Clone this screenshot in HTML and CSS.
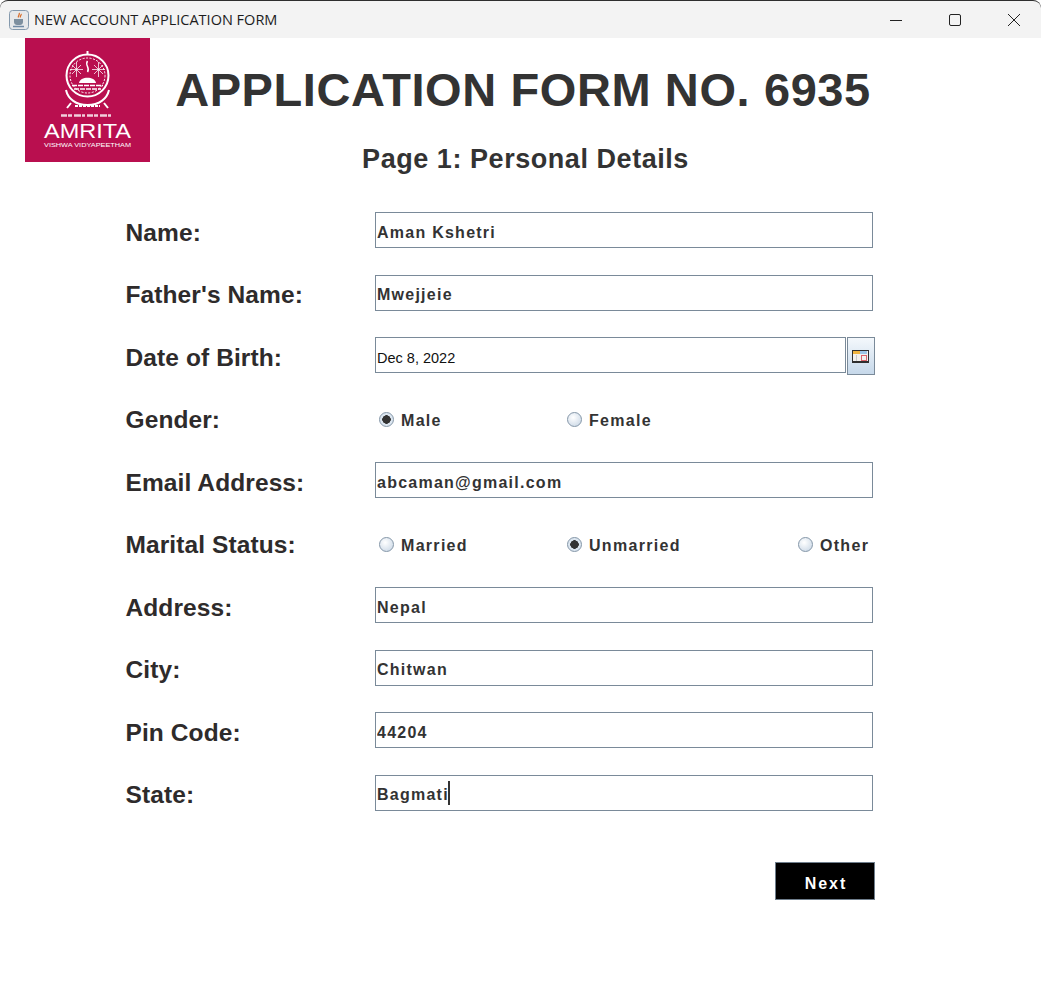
FILE: index.html

```html
<!DOCTYPE html>
<html lang="en">
<head>
  <meta charset="UTF-8" />
  <meta name="viewport" content="width=device-width, initial-scale=1.0" />
  <title>New Account Application Form</title>
  <link rel="stylesheet" href="styles.css">
</head>
<body>
  <div class="titlebar">
    <svg class="app-icon" width="20" height="20" viewBox="0 0 20 20">
      <rect x="0.500" y="0.500" width="19" height="19" rx="3" fill="#e6e8ea" stroke="#8499ad"/>
      <path d="M10 3c1.500 1.500-1.500 2.500-.5 4.500M12 4c1 1-1.500 2-.5 3.500" fill="none" stroke="#d9702e" stroke-width="1.300"/>
      <path d="M5 9h9v3c0 2-1.500 3-3 3H8c-1.500 0-3-1-3-3z" fill="#7d8f9f"/>
      <path d="M4 16.500h11" stroke="#6f8aa5" stroke-width="1.500"/>
    </svg>
    <span class="window-title">NEW ACCOUNT APPLICATION FORM</span>
    <div class="window-controls">
      <svg width="12" height="12" viewBox="0 0 12 12"><path d="M0 6.500h12" stroke="#222" fill="none"/></svg>
      <svg width="12" height="12" viewBox="0 0 12 12"><rect x="0.500" y="0.500" width="11" height="11" rx="1.500" stroke="#222" fill="none"/></svg>
      <svg width="12" height="12" viewBox="0 0 12 12"><path d="M0 0l12 12M12 0L0 12" stroke="#222" fill="none"/></svg>
    </div>
  </div>

  <div class="header">
    <svg class="logo" width="125" height="124" viewBox="0 0 125 124">
      <rect width="125" height="124" fill="#b90f4f"/>
      <g fill="none" stroke="#fff">
        <path d="M62.500 13v3" stroke-width="2"/>
        <circle cx="62.500" cy="37.500" r="21" stroke-width="2"/>
        <circle cx="62.500" cy="37.500" r="17.500" stroke-width="1" stroke-dasharray="2 1.500"/>
        <path d="M47 27l9 9M56 27l-9 9M51.500 24v15M45 31.500h13M69 27l9 9M78 27l-9 9M73.500 24v15M67 31.500h13" stroke-width="1" opacity="0.750"/>
        <path d="M62.500 23c-3 4 3 7 0 11" stroke-width="1.500"/>
        <path d="M41 52c2 9 10 15 21.500 15s19.500-6 21.500-15" stroke-width="2"/>
        <path d="M46 65l-4 5M79 65l4 5" stroke-width="2"/>
        <path d="M50 68h25" stroke-width="2" stroke-dasharray="3 1"/>
        <path d="M36 77.500h52" stroke-width="2.500" stroke-dasharray="6 1 4 2 7 1 3 2" opacity="0.800"/>
      </g>
      <path d="M54 45c1-7 16-7 17 0z" fill="#fff"/>
      <path d="M47 47.500h31M49 51h27" stroke="#fff" stroke-width="1.500" stroke-dasharray="5 1"/>
      <text class="logo-name" x="62.500" y="100" textLength="87" lengthAdjust="spacingAndGlyphs">AMRITA</text>
      <text class="logo-sub" x="62.500" y="109" textLength="87" lengthAdjust="spacingAndGlyphs">VISHWA VIDYAPEETHAM</text>
    </svg>
    <div class="headings">
      <h1>APPLICATION FORM NO. 6935</h1>
      <h2>Page 1: Personal Details</h2>
    </div>
  </div>

  <form class="form">
    <div class="row"><label>Name:</label><input class="field" type="text" value="Aman Kshetri"></div>
    <div class="row"><label>Father's Name:</label><input class="field" type="text" value="Mwejjeie"></div>
    <div class="row">
      <label>Date of Birth:</label>
      <div class="date-wrap">
        <input class="field date" type="text" value="Dec 8, 2022">
        <button class="cal-btn" type="button">
          <svg width="17" height="13" viewBox="0 0 17 13">
            <rect width="17" height="13" fill="#2e2e2e"/>
            <rect x="1" y="1" width="15" height="10" fill="#f2f0ee"/>
            <rect x="1" y="1" width="7" height="3" fill="#f0b440"/>
            <rect x="8" y="1" width="7" height="3" fill="#9cc4e6"/>
            <rect x="9.500" y="5.500" width="5" height="5" fill="none" stroke="#d9636b"/>
            <path d="M4.500 5v6" stroke="#c8c8c8"/>
          </svg>
        </button>
      </div>
    </div>
    <div class="row">
      <label>Gender:</label>
      <div class="radios">
        <span class="radio-item"><i class="radio on"></i>Male</span>
        <span class="radio-item"><i class="radio"></i>Female</span>
      </div>
    </div>
    <div class="row"><label>Email Address:</label><input class="field" type="text" value="abcaman@gmail.com"></div>
    <div class="row">
      <label>Marital Status:</label>
      <div class="radios">
        <span class="radio-item"><i class="radio"></i>Married</span>
        <span class="radio-item"><i class="radio on"></i>Unmarried</span>
        <span class="radio-item"><i class="radio"></i>Other</span>
      </div>
    </div>
    <div class="row"><label>Address:</label><input class="field" type="text" value="Nepal"></div>
    <div class="row"><label>City:</label><input class="field" type="text" value="Chitwan"></div>
    <div class="row"><label>Pin Code:</label><input class="field" type="text" value="44204"></div>
    <div class="row">
      <label>State:</label>
      <div class="field caret-field">Bagmati<span class="caret"></span></div>
    </div>
    <div class="actions"><button class="next" type="button">Next</button></div>
  </form>
</body>
</html>
```

FILE: styles.css

```css
* { box-sizing: border-box; }
body { margin: 0; background: #fff; font-family: "Liberation Sans", Arial, sans-serif; color: #333; }

.titlebar { display: flex; align-items: center; height: 38px; padding-left: 9px; background: #f3f3f3; border-top: 1px solid #2e2e2e; border-radius: 8px 8px 0 0; }
.app-icon { margin-right: 5px; }
.window-title { font-family: "Open Sans", sans-serif; font-size: 14.500px; color: #1c1c1c; }
.window-controls { display: flex; gap: 47px; margin-left: auto; padding-right: 21px; }

.header { display: flex; height: 152px; padding-left: 25px; }
.logo { display: block; }
.logo-name { fill: #fff; font-family: "Liberation Sans", sans-serif; font-size: 20px; text-anchor: middle; }
.logo-sub { fill: #fff; font-family: "Liberation Sans", sans-serif; font-size: 5.500px; text-anchor: middle; }
.headings { width: 746px; text-align: center; }
h1 { margin: 25px 0 0; font-size: 47px; line-height: 54px; font-weight: bold; letter-spacing: 0.600px; color: #333; }
h2 { margin: 26px 0 0 5px; font-size: 27px; line-height: 32px; font-weight: bold; letter-spacing: 0.550px; color: #333; }

.form { display: flex; flex-direction: column; gap: 26.550px; padding: 22px 0 0 125.500px; width: 876px; }
.row { display: flex; align-items: center; height: 36px; }
.row label { width: 249.500px; font-size: 24.500px; font-weight: bold; letter-spacing: 0.100px; color: #2e2b2b; position: relative; top: 2.500px; }

.field { display: block; width: 498px; height: 36px; padding: 5px 1px 0; border: 1px solid #7a8a99; background: #fff; font: bold 16px "Liberation Sans", sans-serif; letter-spacing: 1.250px; color: #333; outline: none; }
.caret-field { display: flex; align-items: center; }
.caret { width: 2px; height: 24px; margin: -5px 0 0 -1px; background: #333; }

.date-wrap { display: flex; align-items: flex-start; width: 500px; height: 36px; }
.date { width: 471px; font: 14.500px "Liberation Sans", sans-serif; letter-spacing: 0; color: #111; }
.cal-btn { display: flex; align-items: center; justify-content: center; flex: none; width: 28px; height: 38px; margin-left: 1px; padding: 0 2px 0 0; border: 1px solid #7a8a99; background: linear-gradient(#f4f8fc, #c6d8ea); }

.radios { display: grid; grid-template-columns: 188px 231px auto; padding: 7px 0 0 4px; }
.radio-item { display: flex; align-items: center; font-size: 16px; font-weight: bold; letter-spacing: 1.300px; color: #333; }
.radio { width: 15px; height: 15px; margin: -3px 7px 0 0; border: 1px solid #8496a8; border-radius: 50%; background: radial-gradient(circle at 40% 35%, #fff, #c4d3e3); }
.radio.on { background: radial-gradient(circle, #333 0 4px, #dce6f0 4.500px); }

.actions { display: flex; justify-content: flex-end; margin-top: 25px; padding-right: 1px; }
.next { width: 100px; height: 38px; padding: 5px 0 0 2px; border: 1px solid #6f7e8c; background: #000; color: #fff; font: bold 16px "Liberation Sans", sans-serif; letter-spacing: 2px; }
```
